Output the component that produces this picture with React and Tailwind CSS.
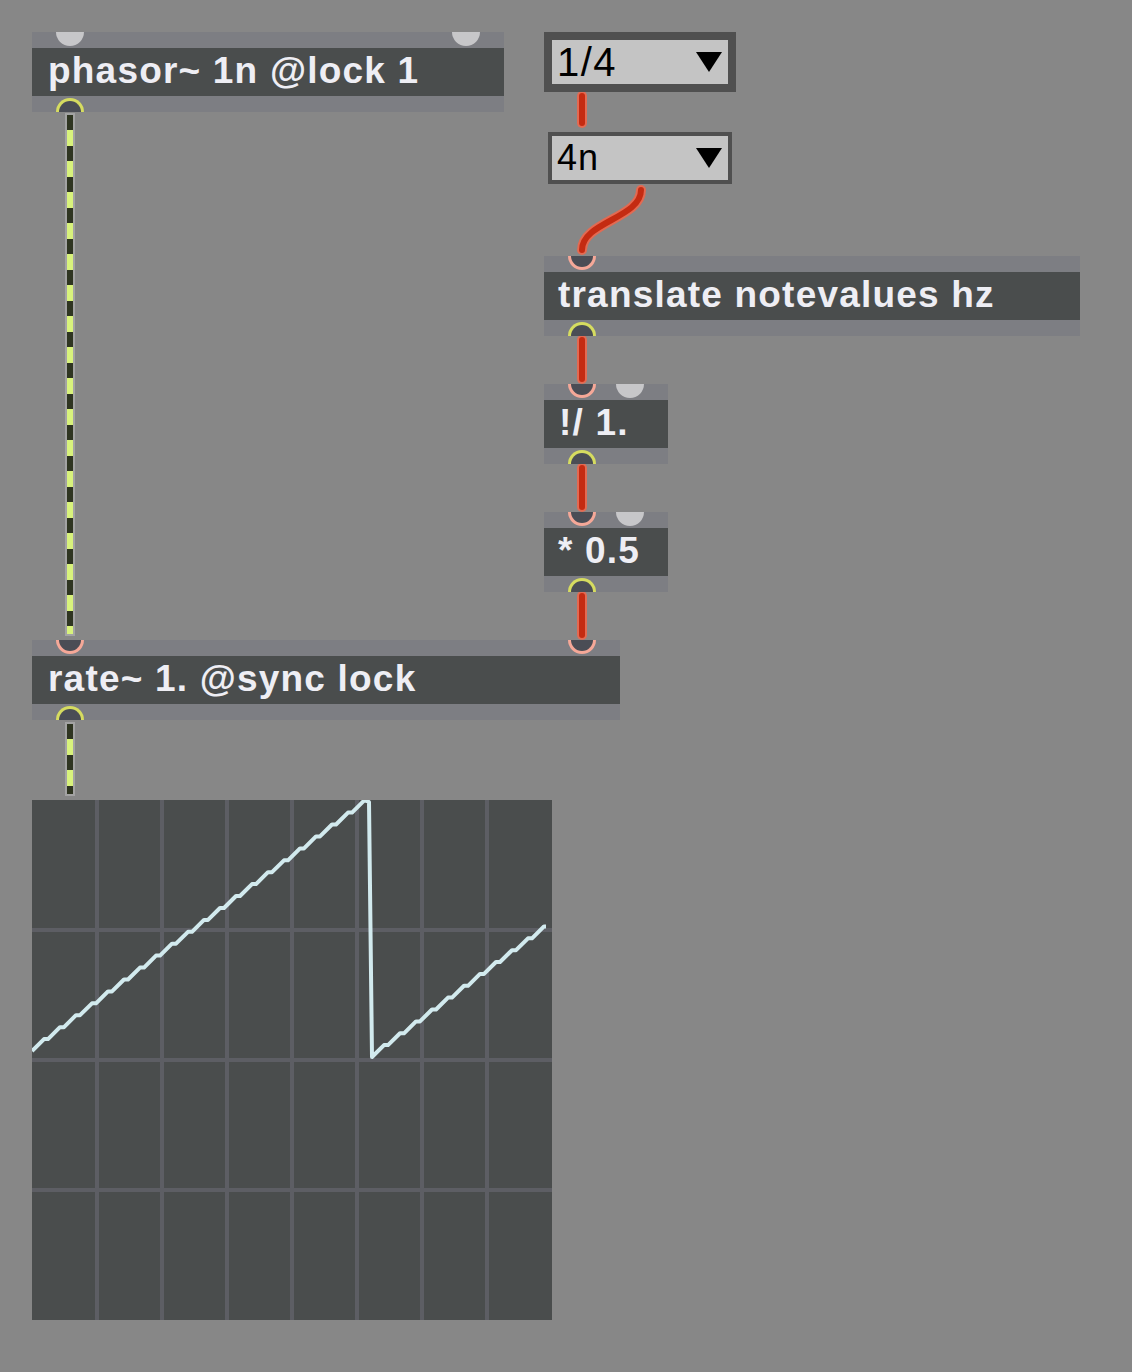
const FONT = "font-['Liberation_Sans',Arial,sans-serif]"

// stepped ramp like the scope draws it
function ramp(x0, y0, x1, m) {
  const pts = [[x0, y0]]
  let x = x0
  let y = y0
  while (x < x1) {
    const rise = Math.min(12, x1 - x)
    x += rise
    y -= rise * m * (16 / 12)
    pts.push([x, y])
    if (x >= x1) break
    const flat = Math.min(4, x1 - x)
    x += flat
    pts.push([x, y])
  }
  return pts
}

const wave = [
  ...ramp(0, 251, 334, 0.745),
  [337, 2],
  [340, 257],
  ...ramp(340, 257, 514, 0.742),
]
const wavePath = wave.map((p, i) => `${i ? 'L' : 'M'}${p[0].toFixed(1)} ${p[1].toFixed(1)}`).join(' ')

function Port({ x, kind }) {
  if (kind === 'out') {
    return (
      <div
        className="absolute bottom-0 w-7 h-[14px] rounded-t-full border-[3px] border-b-0 border-[#d6dc60] bg-[#4a4d55]"
        style={{ left: x - 14 }}
      />
    )
  }
  if (kind === 'in') {
    return (
      <div
        className="absolute top-0 w-7 h-[14px] rounded-b-full border-[3px] border-t-0 border-[#f5a898] bg-[#4a4d55]"
        style={{ left: x - 14 }}
      />
    )
  }
  return (
    <div
      className="absolute top-0 w-7 h-[14px] rounded-b-full bg-[#c7c7c9]"
      style={{ left: x - 14 }}
    />
  )
}

function MaxBox({ x, y, w, text, inlets, pad = 'pl-4' }) {
  return (
    <div className="absolute flex flex-col" style={{ left: x, top: y, width: w }}>
      <div className="h-4 bg-[#7d7e83]" />
      <div className={`h-12 bg-[#4a4d4d] ${pad} whitespace-nowrap overflow-hidden`}>
        <span className={`${FONT} font-bold text-[37px] leading-[45px] tracking-[1.2px] text-[#eeeef4]`}>
          {text}
        </span>
      </div>
      <div className="h-4 bg-[#7d7e83]" />
      {inlets.map((p, i) => (
        <Port key={i} x={p.x} kind={p.kind} />
      ))}
      <Port x={38} kind="out" />
    </div>
  )
}

function Menu({ x, y, w, h, thick, label }) {
  return (
    <div
      className={`absolute bg-[#c4c4c4] border-[#505050] flex items-center justify-between pl-[5px] pr-[6px] ${thick ? 'border-8' : 'border-4'}`}
      style={{ left: x, top: y, width: w, height: h }}
    >
      <span
        className={`${FONT} leading-[48px] text-black ${thick ? 'text-[40px] tracking-[1.5px]' : 'text-[36px] tracking-[1px]'}`}
      >
        {label}
      </span>
      <div className="w-0 h-0 border-x-[13px] border-x-transparent border-t-[20px] border-t-black" />
    </div>
  )
}

function Cords() {
  return (
    <svg className="absolute left-0 top-0" width="1132" height="1372">
      {/* signal cords */}
      {[
        [113, 636],
        [722, 796],
      ].map(([a, b], i) => (
        <g key={i}>
          <rect x="65" y={a} width="10" height={b - a} fill="#a3a3a3" />
          <rect x="67" y={a + 2} width="6" height={b - a - 4} fill="#d8f27c" />
          <line x1="70" y1={a + 2} x2="70" y2={b - 2} stroke="#2f3521" strokeWidth="6" strokeDasharray="15 16" />
        </g>
      ))}
      {/* control cords */}
      {[
        'M582 96 L582 123',
        'M641 190 C641 218 582 222 582 250',
        'M582 340 L582 379',
        'M582 468 L582 507',
        'M582 596 L582 635',
      ].map((d, i) => (
        <g key={i} fill="none" strokeLinecap="round">
          <path d={d} stroke="#e36a52" strokeWidth="10" />
          <path d={d} stroke="#c42b12" strokeWidth="6" />
        </g>
      ))}
    </svg>
  )
}

function Scope() {
  const cols = [65, 130, 195, 260, 325, 390, 455]
  const rows = [130, 260, 390]
  return (
    <div className="absolute left-8 top-[800px] w-[520px] h-[520px] bg-[#4a4d4d]">
      <svg width="520" height="520" className="block">
        {cols.map((c) => (
          <line key={'c' + c} x1={c} y1="0" x2={c} y2="520" stroke="#5d5e64" strokeWidth="4" />
        ))}
        {rows.map((r) => (
          <line key={'r' + r} x1="0" y1={r} x2="520" y2={r} stroke="#5d5e64" strokeWidth="4" />
        ))}
        <path d={wavePath} fill="none" stroke="#d2eaee" strokeWidth="4" strokeLinejoin="round" />
      </svg>
    </div>
  )
}

export default function App() {
  return (
    <div className="relative w-[1132px] h-[1372px] bg-[#878787] overflow-hidden">
      <Cords />

      <MaxBox
        x={32}
        y={32}
        w={472}
        text="phasor~ 1n @lock 1"
        inlets={[
          { x: 38, kind: 'free' },
          { x: 434, kind: 'free' },
        ]}
      />

      <Menu x={544} y={32} w={192} h={60} thick label="1/4" />
      <Menu x={548} y={132} w={184} h={52} label="4n" />

      <MaxBox x={544} y={256} w={536} text="translate notevalues hz" pad="pl-[14px]" inlets={[{ x: 38, kind: 'in' }]} />

      <MaxBox
        x={544}
        y={384}
        w={124}
        text="!/ 1."
        pad="pl-[15px]"
        inlets={[
          { x: 38, kind: 'in' },
          { x: 86, kind: 'free' },
        ]}
      />

      <MaxBox
        x={544}
        y={512}
        w={124}
        text="* 0.5"
        pad="pl-[14px]"
        inlets={[
          { x: 38, kind: 'in' },
          { x: 86, kind: 'free' },
        ]}
      />

      <MaxBox
        x={32}
        y={640}
        w={588}
        text="rate~ 1. @sync lock"
        inlets={[
          { x: 38, kind: 'in' },
          { x: 550, kind: 'in' },
        ]}
      />

      <Scope />
    </div>
  )
}
